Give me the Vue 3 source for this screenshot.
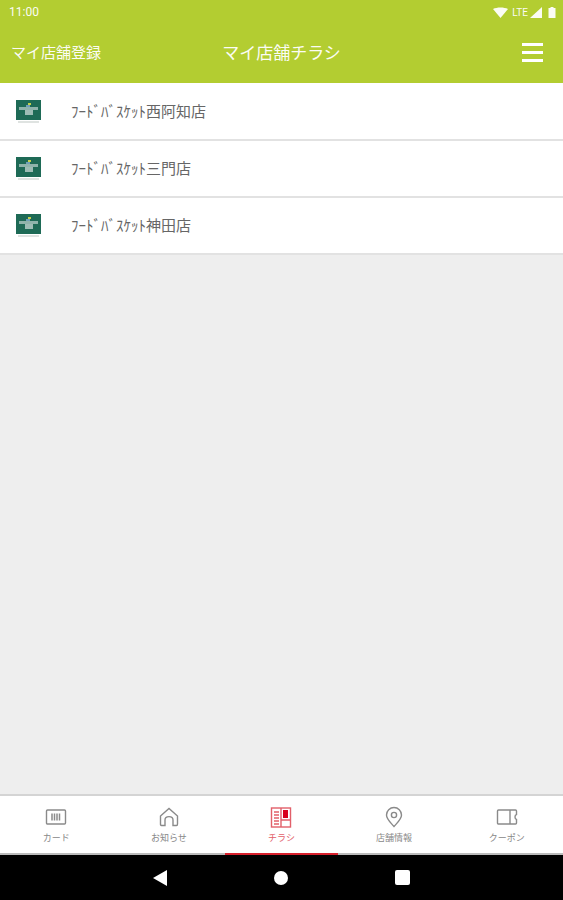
<template>
  <div class="screen">
    <header class="top">
      <div class="status">
        <span class="time">11:00</span>
        <div class="status-icons">
          <svg width="15" height="11" viewBox="0 0 15 11"><path d="M0 2C4 0 11 0 15 2L7.5 11z" fill="#fff" /></svg>
          <span class="lte">LTE</span>
          <svg class="signal" width="12" height="11" viewBox="0 0 12 11"><path d="M12 0V11H0z" fill="#fff" /></svg>
          <svg width="8" height="11" viewBox="0 0 8 11"><path d="M2.5 0H5.5V1H7.5V11H.5V1H2.5z" fill="#fff" /></svg>
        </div>
      </div>
      <div class="title-bar">
        <span class="left-link">マイ店舗登録</span>
        <span class="title">マイ店舗チラシ</span>
        <div class="burger"><i></i><i></i><i></i></div>
      </div>
    </header>

    <ul class="stores">
      <li v-for="store in stores" :key="store" class="store">
        <svg class="logo" width="26" height="26" viewBox="0 0 26 26">
          <rect x="0" y="1" width="25" height="20" fill="#1e6a56" />
          <rect x="3" y="8" width="19" height="3" fill="#8fb3ab" />
          <rect x="9" y="11" width="8" height="5" fill="#9dbcb5" />
          <rect x="12" y="4" width="3" height="2" fill="#c6d24a" />
          <rect x="10" y="6" width="4" height="2" fill="#6f9fb8" />
          <rect x="2" y="22" width="21" height="2" fill="#dfe3e1" />
        </svg>
        <span class="store-name">{{ store }}</span>
      </li>
    </ul>

    <main class="empty"></main>

    <nav class="tabs">
      <div v-for="tab in tabs" :key="tab.label" class="tab" :class="{ active: tab.active }">
        <svg width="24" height="24" viewBox="0 0 24 24" fill="none" :stroke="tab.active ? '#e2606a' : '#8a8a8a'" stroke-width="1.4">
          <template v-if="tab.icon === 'card'">
            <rect x="2.5" y="5" width="19" height="14" rx="1" />
            <path d="M8 8.5V15.5M10.5 8.5V15.5M13 8.5V15.5M15.5 8.5V15.5" stroke-width="1.5" />
          </template>
          <template v-else-if="tab.icon === 'home'">
            <path d="M4.5 20.5C3.5 20.5 3.5 19.5 3.5 19V11L12 3.5L20.5 11V19C20.5 20 20 20.5 19.5 20.5H16V15C16 10.5 8 10.5 8 15V20.5Z" />
          </template>
          <template v-else-if="tab.icon === 'flyer'">
            <rect x="2.5" y="3" width="19" height="19" />
            <path d="M5 7H10M5 10H10M5 13H10M5 16H10M5 19H10" />
            <path d="M12 3V22M12 15H21" />
            <rect x="14" y="5" width="5" height="8" fill="#d8001c" stroke="none" />
          </template>
          <template v-else-if="tab.icon === 'pin'">
            <path d="M12 21.5C8 17 4.5 14 4.5 10A7.5 7.5 0 0 1 19.5 10C19.5 14 16 17 12 21.5Z" />
            <circle cx="12" cy="10" r="2.6" />
          </template>
          <template v-else>
            <path d="M3.5 5H20.5C21 5 21.5 5.5 21.5 6V9.5C19.5 10 19.5 14 21.5 14.5V18C21.5 18.5 21 19 20.5 19H3.5C3 19 2.5 18.5 2.5 18V6C2.5 5.5 3 5 3.5 5Z" />
            <path d="M15 5V19" />
          </template>
        </svg>
        <span class="tab-label">{{ tab.label }}</span>
      </div>
    </nav>

    <footer class="android-nav">
      <svg width="14" height="16" viewBox="0 0 14 16"><path d="M14 0V16L0 8z" fill="#fff" /></svg>
      <span class="circle"></span>
      <span class="square"></span>
    </footer>
  </div>
</template>

<script setup>
const stores = ['ﾌｰﾄﾞﾊﾞｽｹｯﾄ西阿知店', 'ﾌｰﾄﾞﾊﾞｽｹｯﾄ三門店', 'ﾌｰﾄﾞﾊﾞｽｹｯﾄ神田店']

const tabs = [
  { label: 'カード', icon: 'card' },
  { label: 'お知らせ', icon: 'home' },
  { label: 'チラシ', icon: 'flyer', active: true },
  { label: '店舗情報', icon: 'pin' },
  { label: 'クーポン', icon: 'coupon' },
]
</script>

<style>
body {
  margin: 0;
}
</style>

<style scoped>
.screen {
  width: 563px;
  height: 900px;
  display: flex;
  flex-direction: column;
  overflow: hidden;
  background: #eeeeee;
  font-family: Roboto, 'Noto Sans CJK JP', sans-serif;
}

.top {
  height: 83px;
  flex-shrink: 0;
  background: #b3cd31;
  color: #fff;
}

.status {
  height: 24px;
  display: flex;
  justify-content: space-between;
  align-items: center;
  padding: 0 7px 0 9px;
  font-size: 12px;
  opacity: 0.95;
}

.status-icons {
  display: flex;
  align-items: center;
}

.lte {
  width: 16px;
  margin: 0 2px 0 4px;
  font-size: 10px;
  text-align: center;
  white-space: nowrap;
}

.signal {
  margin-right: 6px;
}

.title-bar {
  position: relative;
  height: 59px;
  display: flex;
  align-items: center;
  justify-content: center;
}

.left-link {
  position: absolute;
  left: 11px;
  top: 18px;
  font-size: 15px;
  line-height: 22px;
  opacity: 0.95;
}

.title {
  font-size: 17px;
  line-height: 22px;
  margin-top: -1px;
  opacity: 0.95;
}

.burger {
  position: absolute;
  right: 20px;
  top: 19px;
  width: 21px;
  display: flex;
  flex-direction: column;
  gap: 5px;
}

.burger i {
  display: block;
  height: 3px;
  background: #fff;
}

.stores {
  list-style: none;
  margin: 0;
  padding: 1px 0 0;
  background: #fff;
}

.store {
  height: 57px;
  box-sizing: border-box;
  display: flex;
  align-items: center;
  padding-left: 16px;
  border-bottom: 2px solid #e2e2e2;
}

.logo {
  flex-shrink: 0;
}

.store-name {
  margin-left: 29px;
  margin-bottom: 3px;
  font-size: 15px;
  color: #666;
}

.empty {
  flex: 1;
}

.tabs {
  height: 61px;
  flex-shrink: 0;
  display: flex;
  box-sizing: border-box;
  border-top: 2px solid #d4d4d4;
  background: #fff;
}

.tab {
  flex: 1;
  display: flex;
  flex-direction: column;
  align-items: center;
  box-sizing: border-box;
  padding-top: 9px;
  border-bottom: 2px solid #bbb;
  color: #888;
}

.tab.active {
  border-bottom-color: #d8202c;
  color: #e2606a;
}

.tab-label {
  font-size: 9px;
  line-height: 12px;
  margin-top: 3px;
}

.android-nav {
  height: 45px;
  flex-shrink: 0;
  background: #000;
  display: flex;
  align-items: center;
  justify-content: center;
  gap: 107px;
}

.circle {
  width: 14px;
  height: 14px;
  border-radius: 50%;
  background: #fff;
}

.square {
  width: 15px;
  height: 15px;
  border-radius: 2px;
  background: #fff;
}
</style>
